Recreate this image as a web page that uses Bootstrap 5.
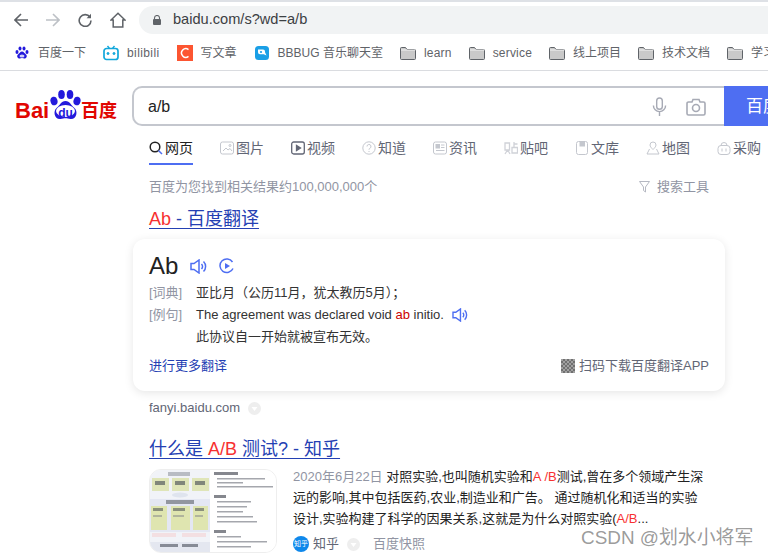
<!DOCTYPE html>
<html lang="zh-CN">
<head>
  <meta charset="UTF-8">
  <title>a/b_百度搜索</title>
  <link href="https://cdn.jsdelivr.net/npm/bootstrap@5.3.2/dist/css/bootstrap.min.css" rel="stylesheet">
  <style>
    html, body { height: 556px; overflow: hidden; }
    body { font-family: "Liberation Sans", "Noto Sans CJK SC", sans-serif; font-size: 13px; color: #222; background: #fff; position: relative; }
    svg { display: block; flex: none; }

    /* browser chrome */
    .top-strip { height: 2px; background: #dee1e6; }
    .tool-row { height: 34px; padding: 2px 0 0 14px; }
    .tool-icons { width: 125px; gap: 18px; flex: none; }
    .omni { height: 28px; flex: 1; background: #f1f3f4; border-radius: 14px 0 0 14px; padding-left: 14px; gap: 12px; font-size: 14.6px; color: #3c4043; }
    .mark-row { height: 35px; padding-left: 14px; gap: 17px; border-bottom: 1px solid #dadce0; font-size: 12px; color: #5f6368; white-space: nowrap; overflow: hidden; }
    .mark-item { gap: 8px; }
    .mark-latin { letter-spacing: .4px; }
    .mark-tight { letter-spacing: .2px; }

    /* search box */
    .search-row { margin-top: 15px; padding-left: 15px; height: 40px; }
    .bd-logo { width: 117px; flex: none; position: relative; height: 40px; }
    .bd-logo-bai { position: absolute; left: 0; top: 14px; font-size: 22px; line-height: 22px; font-weight: 700; color: #e10601; }
    .bd-logo-paw { position: absolute; left: 35px; top: 4px; }
    .bd-logo-du { position: absolute; left: 40px; top: 20px; width: 21px; text-align: center; font-size: 12px; line-height: 14px; font-weight: 700; color: #2319dc; }
    .bd-logo-cn { position: absolute; left: 66px; top: 14px; font-size: 18px; line-height: 22px; font-weight: 700; color: #e10601; white-space: nowrap; }
    .search-box { flex: 1; height: 40px; border: 2px solid #c4c7ce; border-right: 0; border-radius: 10px 0 0 10px; padding: 1px 18px 0 14px; font-size: 16px; color: #222; }
    .search-tools { gap: 19px; }
    .search-btn { width: 44px; height: 40px; flex: none; background: #4e6ef2; color: #fff; font-size: 17px; padding-left: 22px; line-height: 42px; white-space: nowrap; overflow: hidden; }

    /* tabs */
    .main-col { padding-left: 149px; width: 725px; }
    .tab-row { height: 38px; padding-top: 12px; gap: 27px; font-size: 14px; color: #626675; white-space: nowrap; }
    .tab-item { gap: 2px; height: 20px; width: 44px; flex: none; }
    .tab-item.is-on { color: #222; position: relative; }
    .tab-item.is-on::after { content: ""; position: absolute; left: 0; right: 0; top: 25px; height: 2px; background: #4e6ef2; }
    .tip-row { margin-top: 14px; height: 18px; width: 560px; color: #9195a3; }
    .tip-tools { gap: 7px; color: #9195a3; }

    .res-title { font-size: 18px; line-height: 24px; color: #2440b3; text-decoration: underline; text-underline-offset: 3px; white-space: nowrap; }
    .res-title em { font-style: normal; color: #f73131; }
    .title-one { margin-top: 11px; }

    /* translate card */
    .fanyi-box { margin: 8px 0 0 -16px; width: 592px; height: 152px; border-radius: 12px; background: #fff; box-shadow: 0 2px 10px rgba(0,0,0,.1); padding: 12px 16px 0; }
    .fanyi-word { font-size: 24px; line-height: 30px; color: #222; gap: 12px; }
    .fanyi-line { line-height: 22px; color: #333; white-space: nowrap; }
    .fanyi-first { margin-top: 1px; }
    .fanyi-tag { width: 47px; flex: none; color: #9195a3; }
    .fanyi-line b { font-weight: 400; color: #c00; }
    .fanyi-foot { margin-top: 5px; height: 26px; color: #2440b3; }
    .fanyi-app { gap: 4px; color: #626675; }
    .qr-code { width: 14px; height: 14px; background: repeating-conic-gradient(#707070 0 25%, #a0a0a0 0 50%) 0 0 / 4px 4px; }
    .src-row { margin-top: 8px; height: 18px; color: #626675; gap: 8px; }
    .title-two { margin-top: 20px; }

    /* second result */
    .res-body { margin-top: 8px; gap: 16px; }
    .res-thumb { width: 128px; height: 84px; flex: none; border: 1px solid #eee; border-radius: 12px; overflow: hidden; }
    .res-thumb svg { filter: blur(.6px); }
    .res-text { line-height: 21px; color: #222; white-space: nowrap; margin-top: -3px; }
    .res-text em { font-style: normal; color: #f73131; }
    .res-date { color: #9195a3; }
    .res-meta { margin-top: 4px; height: 22px; color: #626675; }
    .zh-icon { width: 16px; height: 16px; border-radius: 50%; background: #0f88eb; color: #fff; font-size: 7px; line-height: 16px; text-align: center; flex: none; margin-right: 4px; }
    .kz-link { color: #9195a3; margin-left: 13px; }
    .dot-meta { margin-left: 8px; }
    .csdn-mark { position: absolute; left: 581px; top: 526px; font-size: 18.9px; line-height: 24px; color: rgba(90,90,90,.62); white-space: nowrap; }
  </style>
</head>
<body>
  <div class="top-strip"></div>

  <div class="tool-row d-flex align-items-center">
    <div class="tool-icons d-flex align-items-center">
      <svg width="14" height="14" viewBox="0 0 14 14" fill="none" stroke="#5f6368" stroke-width="1.6"><path d="M14 7H1.5M7 1L1 7l6 6"/></svg>
      <svg width="14" height="14" viewBox="0 0 14 14" fill="none" stroke="#bdc1c6" stroke-width="1.6"><path d="M0 7h12.5M7 1l6 6-6 6"/></svg>
      <svg width="14" height="14" viewBox="0 0 14 14" fill="none" stroke="#5f6368" stroke-width="1.6"><path d="M12 4.2A5.9 5.9 0 1 0 13 7.5"/><path d="M13 .8v4.4H8.6" fill="#5f6368" stroke="none"/></svg>
      <svg width="16" height="16" viewBox="0 0 16 16" fill="none" stroke="#5f6368" stroke-width="1.5"><path d="M8 1.2L1 8h2.2v7h9.6V8H15z"/></svg>
    </div>
    <div class="omni d-flex align-items-center">
      <svg width="8" height="10" viewBox="0 0 8 10"><path d="M1.5 4V3a2.5 2.5 0 0 1 5 0v1" fill="none" stroke="#5f6368" stroke-width="1.1"/><rect y="4" width="8" height="6" rx="1" fill="#5f6368"/></svg>
      <span>baidu.com/s?wd=a/b</span>
    </div>
  </div>

  <div class="mark-row d-flex align-items-center">
    <div class="mark-item d-flex align-items-center">
      <svg width="16" height="16" viewBox="0 0 16 16" fill="#2319dc"><ellipse cx="3" cy="7" rx="1.5" ry="2"/><ellipse cx="6" cy="3.5" rx="1.5" ry="2"/><ellipse cx="10" cy="3.5" rx="1.5" ry="2"/><ellipse cx="13" cy="7" rx="1.5" ry="2"/><path d="M8 6.5c2 0 2.5 2 4 3 1.500 1.200.8 4.300-2 4-1-.1-1.300-.4-2-.4s-1 .3-2 .4c-2.800.3-3.500-2.800-2-4 1.500-1 2-3 4-3z"/><ellipse cx="8" cy="11" rx="2.500" ry="1.500" fill="#cfd0f5"/></svg>
      <span>百度一下</span>
    </div>
    <div class="mark-item d-flex align-items-center">
      <svg width="16" height="16" viewBox="0 0 16 16" fill="none" stroke="#12a7db"><rect x="1" y="3.500" width="14" height="11" rx="2.500" stroke-width="1.700"/><path d="M4.500 1l2 2.500M11.500 1l-2 2.500" stroke-width="1.400"/><circle cx="5" cy="8.500" r="1" fill="#12a7db"/><circle cx="11" cy="8.500" r="1" fill="#12a7db"/></svg>
      <span class="mark-latin">bilibili</span>
    </div>
    <div class="mark-item d-flex align-items-center">
      <svg width="16" height="16" viewBox="0 0 16 16"><rect width="16" height="16" fill="#fc5531"/><path d="M11.500 4.600A4.300 4.300 0 1 0 11.500 11.400" fill="none" stroke="#fff" stroke-width="1.500"/></svg>
      <span>写文章</span>
    </div>
    <div class="mark-item d-flex align-items-center">
      <svg width="16" height="16" viewBox="0 0 16 16"><rect x="1" y="1" width="14" height="14" rx="3.500" fill="#1a9fe6"/><path d="M4 4.500h5a2 2 0 0 1 2 2v.8l1.500 3.200-2.700-1.300H6a2 2 0 0 1-2-2z" fill="#fff"/><circle cx="7" cy="7" r="1.100" fill="#1a9fe6"/></svg>
      <span>BBBUG 音乐聊天室</span>
    </div>
    <div class="mark-item d-flex align-items-center">
      <svg width="16" height="13" viewBox="0 0 16 13"><path d="M.5 1.500a1 1 0 0 1 1-1h4l1.500 2h7.500a1 1 0 0 1 1 1v8a1 1 0 0 1-1 1h-13a1 1 0 0 1-1-1z" fill="#c9c9c9" stroke="#5f6368"/><path d="M1 3h14" stroke="#fff" stroke-width=".8"/></svg>
      <span class="mark-tight">learn</span>
    </div>
    <div class="mark-item d-flex align-items-center">
      <svg width="16" height="13" viewBox="0 0 16 13"><path d="M.5 1.500a1 1 0 0 1 1-1h4l1.500 2h7.500a1 1 0 0 1 1 1v8a1 1 0 0 1-1 1h-13a1 1 0 0 1-1-1z" fill="#c9c9c9" stroke="#5f6368"/><path d="M1 3h14" stroke="#fff" stroke-width=".8"/></svg>
      <span class="mark-tight">service</span>
    </div>
    <div class="mark-item d-flex align-items-center">
      <svg width="16" height="13" viewBox="0 0 16 13"><path d="M.5 1.500a1 1 0 0 1 1-1h4l1.500 2h7.500a1 1 0 0 1 1 1v8a1 1 0 0 1-1 1h-13a1 1 0 0 1-1-1z" fill="#c9c9c9" stroke="#5f6368"/><path d="M1 3h14" stroke="#fff" stroke-width=".8"/></svg>
      <span>线上项目</span>
    </div>
    <div class="mark-item d-flex align-items-center">
      <svg width="16" height="13" viewBox="0 0 16 13"><path d="M.5 1.500a1 1 0 0 1 1-1h4l1.500 2h7.500a1 1 0 0 1 1 1v8a1 1 0 0 1-1 1h-13a1 1 0 0 1-1-1z" fill="#c9c9c9" stroke="#5f6368"/><path d="M1 3h14" stroke="#fff" stroke-width=".8"/></svg>
      <span>技术文档</span>
    </div>
    <div class="mark-item d-flex align-items-center">
      <svg width="16" height="13" viewBox="0 0 16 13"><path d="M.5 1.500a1 1 0 0 1 1-1h4l1.500 2h7.500a1 1 0 0 1 1 1v8a1 1 0 0 1-1 1h-13a1 1 0 0 1-1-1z" fill="#c9c9c9" stroke="#5f6368"/><path d="M1 3h14" stroke="#fff" stroke-width=".8"/></svg>
      <span>学习</span>
    </div>
  </div>

  <div class="search-row d-flex">
    <div class="bd-logo">
      <span class="bd-logo-bai">Bai</span>
      <svg class="bd-logo-paw" width="31" height="30" viewBox="0 0 31 30" fill="#2319dc"><ellipse cx="4" cy="11" rx="3.500" ry="4.300" transform="rotate(-15 4 11)"/><ellipse cx="11.500" cy="4.500" rx="3.300" ry="4.500"/><ellipse cx="20" cy="4.500" rx="3.300" ry="4.500"/><ellipse cx="27" cy="11" rx="3.500" ry="4.300" transform="rotate(15 27 11)"/><path d="M15.500 11c4.500 0 5.500 4.500 9 7 3.500 3 2.500 11.500-4 11-2.200-.2-3.200-.8-5-.8s-2.800.6-5 .8c-6.500.5-7.500-8-4-11 3.500-2.500 4.500-7 9-7z"/><ellipse cx="15.500" cy="21" rx="9.500" ry="6" fill="#fff"/></svg>
      <span class="bd-logo-du">du</span>
      <span class="bd-logo-cn">百度</span>
    </div>
    <div class="search-box d-flex align-items-center justify-content-between">
      <span>a/b</span>
      <div class="search-tools d-flex align-items-center">
        <svg width="15" height="19" viewBox="0 0 16 20" fill="none" stroke="#a7aab5" stroke-width="1.500"><rect x="5" y="1" width="6" height="12" rx="3"/><path d="M1.500 9a6.500 6.500 0 0 0 13 0M8 15.500V20"/></svg>
        <svg width="20" height="18" viewBox="0 0 20 18" fill="none" stroke="#a7aab5" stroke-width="1.600"><path d="M1 5.500a1.500 1.500 0 0 1 1.500-1.500H6l1-2.500h6L14 4h3.500A1.500 1.500 0 0 1 19 5.500v10a1.500 1.500 0 0 1-1.500 1.500h-15A1.500 1.500 0 0 1 1 15.500z"/><circle cx="10" cy="10" r="3.500"/></svg>
      </div>
    </div>
    <div class="search-btn">百度一下</div>
  </div>

  <div class="main-col">
    <div class="tab-row d-flex">
      <div class="tab-item is-on d-flex align-items-center">
        <svg width="14" height="14" viewBox="0 0 14 14" fill="none" stroke="#222" stroke-width="1.500"><circle cx="6" cy="6" r="4.800"/><path d="M9.500 9.500L13 13" stroke="#4e6ef2"/></svg><span>网页</span>
      </div>
      <div class="tab-item d-flex align-items-center">
        <svg width="14" height="14" viewBox="0 0 14 14" fill="none" stroke="#c4c7ce"><rect x=".5" y="1" width="13" height="12" rx="2"/><path d="M3 10l3-3 2 2 2-1.500 2 2.500" /><circle cx="10" cy="4.500" r="1"/></svg><span>图片</span>
      </div>
      <div class="tab-item d-flex align-items-center">
        <svg width="14" height="14" viewBox="0 0 14 14" fill="none" stroke="#626675" stroke-width="1.300"><rect x=".7" y="1" width="12.600" height="12" rx="2"/><path d="M5.500 4.500v5l4-2.500z" fill="#626675"/></svg><span>视频</span>
      </div>
      <div class="tab-item d-flex align-items-center">
        <svg width="14" height="14" viewBox="0 0 14 14" fill="none" stroke="#c4c7ce"><circle cx="7" cy="7" r="6.200"/><path d="M5 5.500a2 2 0 1 1 2.800 1.800c-.6.300-.8.700-.8 1.400M7 10v1"/></svg><span>知道</span>
      </div>
      <div class="tab-item d-flex align-items-center">
        <svg width="14" height="14" viewBox="0 0 14 14" fill="none" stroke="#c4c7ce"><rect x=".5" y="1" width="13" height="12" rx="2"/><rect x="3" y="3.500" width="3.500" height="3.500" fill="#c4c7ce"/><path d="M8 4h3.500M8 6.500h3.500M3 9.500h8.500"/></svg><span>资讯</span>
      </div>
      <div class="tab-item d-flex align-items-center">
        <svg width="14" height="14" viewBox="0 0 14 14" fill="none" stroke="#d0d2d8" stroke-width="1.300"><path d="M1 2h4.500v7H1zM3.200 9.500L1 13M4 9.500L6 13M10 1v5M10 3h3.500M8 6.500h5.500V12H8z"/></svg><span>贴吧</span>
      </div>
      <div class="tab-item d-flex align-items-center">
        <svg width="14" height="14" viewBox="0 0 14 14" fill="none" stroke="#c4c7ce"><rect x="1.500" y=".5" width="11" height="13" rx="2"/><rect x="5" y=".5" width="4.500" height="4.500" fill="#c4c7ce"/></svg><span>文库</span>
      </div>
      <div class="tab-item d-flex align-items-center">
        <svg width="14" height="14" viewBox="0 0 14 14" fill="none" stroke="#c4c7ce"><path d="M7 1a3 3 0 0 1 3 3c0 1.500-1.500 3-3 4.500C5.500 7 4 5.500 4 4a3 3 0 0 1 3-3zM3.500 8L1 13h12l-2.500-5"/></svg><span>地图</span>
      </div>
      <div class="tab-item d-flex align-items-center">
        <svg width="14" height="14" viewBox="0 0 14 14" fill="none" stroke="#c4c7ce"><path d="M4 4.500a3 3 0 0 1 6 0"/><rect x="1" y="4.500" width="12" height="9" rx="3"/><path d="M5 7.500v3M9 7.500v3"/></svg><span>采购</span>
      </div>
    </div>

    <div class="tip-row d-flex align-items-center justify-content-between">
      <span>百度为您找到相关结果约100,000,000个</span>
      <div class="tip-tools d-flex align-items-center">
        <svg width="11" height="12" viewBox="0 0 11 12" fill="none" stroke="#b5b8c2"><path d="M.5.500h10L6.500 6v5L4.500 9.500V6z"/></svg>
        <span>搜索工具</span>
      </div>
    </div>

    <div class="res-title title-one"><em>Ab</em> - 百度翻译</div>

    <div class="fanyi-box">
      <div class="fanyi-word d-flex align-items-center">
        <span>Ab</span>
        <div class="d-flex align-items-center gap-2">
          <svg width="17" height="15" viewBox="0 0 17 15" fill="none" stroke="#4e6ef2" stroke-width="1.500"><path d="M1 4.500h3L9 1v13L4 10.500H1z"/><path d="M11.500 5a3.500 3.500 0 0 1 0 5M13.500 2.500a7 7 0 0 1 0 10"/></svg>
          <svg class="ms-1" width="16" height="16" viewBox="0 0 16 16" fill="none" stroke="#4e6ef2" stroke-width="1.500"><path d="M14 10.500A6.800 6.800 0 1 1 13.500 4"/><path d="M6 5v6l5-3z" fill="#4e6ef2" stroke="none"/></svg>
        </div>
      </div>
      <div class="fanyi-line fanyi-first d-flex"><span class="fanyi-tag">[词典]</span><span>亚比月（公历11月，犹太教历5月）；</span></div>
      <div class="fanyi-line d-flex">
        <span class="fanyi-tag">[例句]</span>
        <span>The agreement was declared void <b>ab</b> initio.</span>
        <svg class="ms-2 mt-1" width="16" height="14" viewBox="0 0 17 15" fill="none" stroke="#4e6ef2" stroke-width="1.500"><path d="M1 4.500h3L9 1v13L4 10.500H1z"/><path d="M11.500 5a3.500 3.500 0 0 1 0 5M13.500 2.500a7 7 0 0 1 0 10"/></svg>
      </div>
      <div class="fanyi-line d-flex"><span class="fanyi-tag"></span><span>此协议自一开始就被宣布无效。</span></div>
      <div class="fanyi-foot d-flex align-items-center justify-content-between">
        <span>进行更多翻译</span>
        <div class="fanyi-app d-flex align-items-center"><div class="qr-code"></div><span>扫码下载百度翻译APP</span></div>
      </div>
    </div>

    <div class="src-row d-flex align-items-center">
      <span>fanyi.baidu.com</span>
      <svg width="13" height="13" viewBox="0 0 13 13"><circle cx="6.500" cy="6.500" r="6.500" fill="#eee"/><path d="M3.500 5h6l-3 4z" fill="#fff"/></svg>
    </div>

    <div class="res-title title-two">什么是 <em>A/B</em> 测试? - 知乎</div>

    <div class="res-body d-flex">
      <div class="res-thumb">
        <svg width="126" height="82" viewBox="0 0 126 82">
          <rect width="126" height="82" fill="#fff"/>
          <rect width="60" height="82" fill="#f1f3f8"/>
          <rect x="18" y="2" width="22" height="4" fill="#b8bcc4"/>
          <rect x="2" y="8" width="17" height="13" fill="#dfe5b8"/><rect x="22" y="8" width="17" height="13" fill="#dfe5b8"/><rect x="42" y="8" width="17" height="13" fill="#dfe5b8"/>
          <rect x="5" y="11" width="10" height="4" fill="#80867a"/><rect x="25" y="11" width="10" height="4" fill="#80867a"/><rect x="45" y="11" width="10" height="4" fill="#80867a"/>
          <ellipse cx="30" cy="25" rx="8" ry="2.500" fill="#dfe4ee"/>
          <rect x="0" y="29" width="60" height="33" fill="#e4e7f3"/>
          <rect x="16" y="30" width="28" height="4" fill="#9296a0"/>
          <rect x="1" y="36" width="16" height="24" fill="#dfe5b0"/><rect x="21" y="36" width="19" height="24" fill="#dfe5b0"/><rect x="43" y="36" width="15" height="24" fill="#dfe5b0"/>
          <rect x="3" y="38" width="10" height="3" fill="#8a8f7c"/><rect x="23" y="38" width="12" height="3" fill="#8a8f7c"/><rect x="45" y="38" width="9" height="3" fill="#8a8f7c"/>
          <rect x="3" y="45" width="9" height="2" fill="#b0b49c"/><rect x="23" y="45" width="11" height="2" fill="#b0b49c"/><rect x="45" y="45" width="8" height="2" fill="#b0b49c"/>
          <rect x="2" y="63" width="24" height="4" fill="#f3dfe2"/><rect x="32" y="63" width="24" height="4" fill="#f3dfe2"/>
          <rect x="0" y="72" width="60" height="10" fill="#e4e7f0"/><rect x="10" y="74" width="18" height="3" fill="#878b96"/><rect x="32" y="74" width="16" height="3" fill="#878b96"/>
          <g fill="#a5a7ad">
            <rect x="64" y="2" width="24" height="3" fill="#85878e"/><rect x="67" y="8" width="48" height="1.500"/><rect x="67" y="12" width="26" height="1.500"/><rect x="67" y="16" width="56" height="1.500"/>
            <rect x="64" y="25" width="12" height="3" fill="#85878e"/><rect x="67" y="31" width="34" height="1.500"/><rect x="67" y="36" width="30" height="1.500"/><rect x="67" y="41" width="26" height="1.500"/><rect x="67" y="46" width="36" height="1.500"/><rect x="67" y="51" width="40" height="1.500"/>
            <rect x="64" y="60" width="12" height="3" fill="#85878e"/><rect x="67" y="66" width="24" height="1.500"/><rect x="67" y="71" width="50" height="1.500"/><rect x="67" y="76" width="34" height="1.500"/>
          </g>
        </svg>
      </div>
      <div>
        <div class="res-text">
          <span class="res-date">2020年6月22日</span>&nbsp;对照实验,也叫随机实验和<em>A /B</em>测试,曾在多个领域产生深<br>
          远的影响,其中包括医药,农业,制造业和广告。 通过随机化和适当的实验<br>
          设计,实验构建了科学的因果关系,这就是为什么对照实验(<em>A/B</em>...
        </div>
        <div class="res-meta d-flex align-items-center">
          <span class="zh-icon">知乎</span><span>知乎</span>
          <svg class="dot-meta" width="13" height="13" viewBox="0 0 13 13"><circle cx="6.500" cy="6.500" r="6.500" fill="#eee"/><path d="M3.500 5h6l-3 4z" fill="#fff"/></svg>
          <span class="kz-link">百度快照</span>
        </div>
      </div>
    </div>
  </div>

  <div class="csdn-mark">CSDN @划水小将军</div>
  <script src="https://cdn.jsdelivr.net/npm/bootstrap@5.3.2/dist/js/bootstrap.bundle.min.js"></script>
</body>
</html>
